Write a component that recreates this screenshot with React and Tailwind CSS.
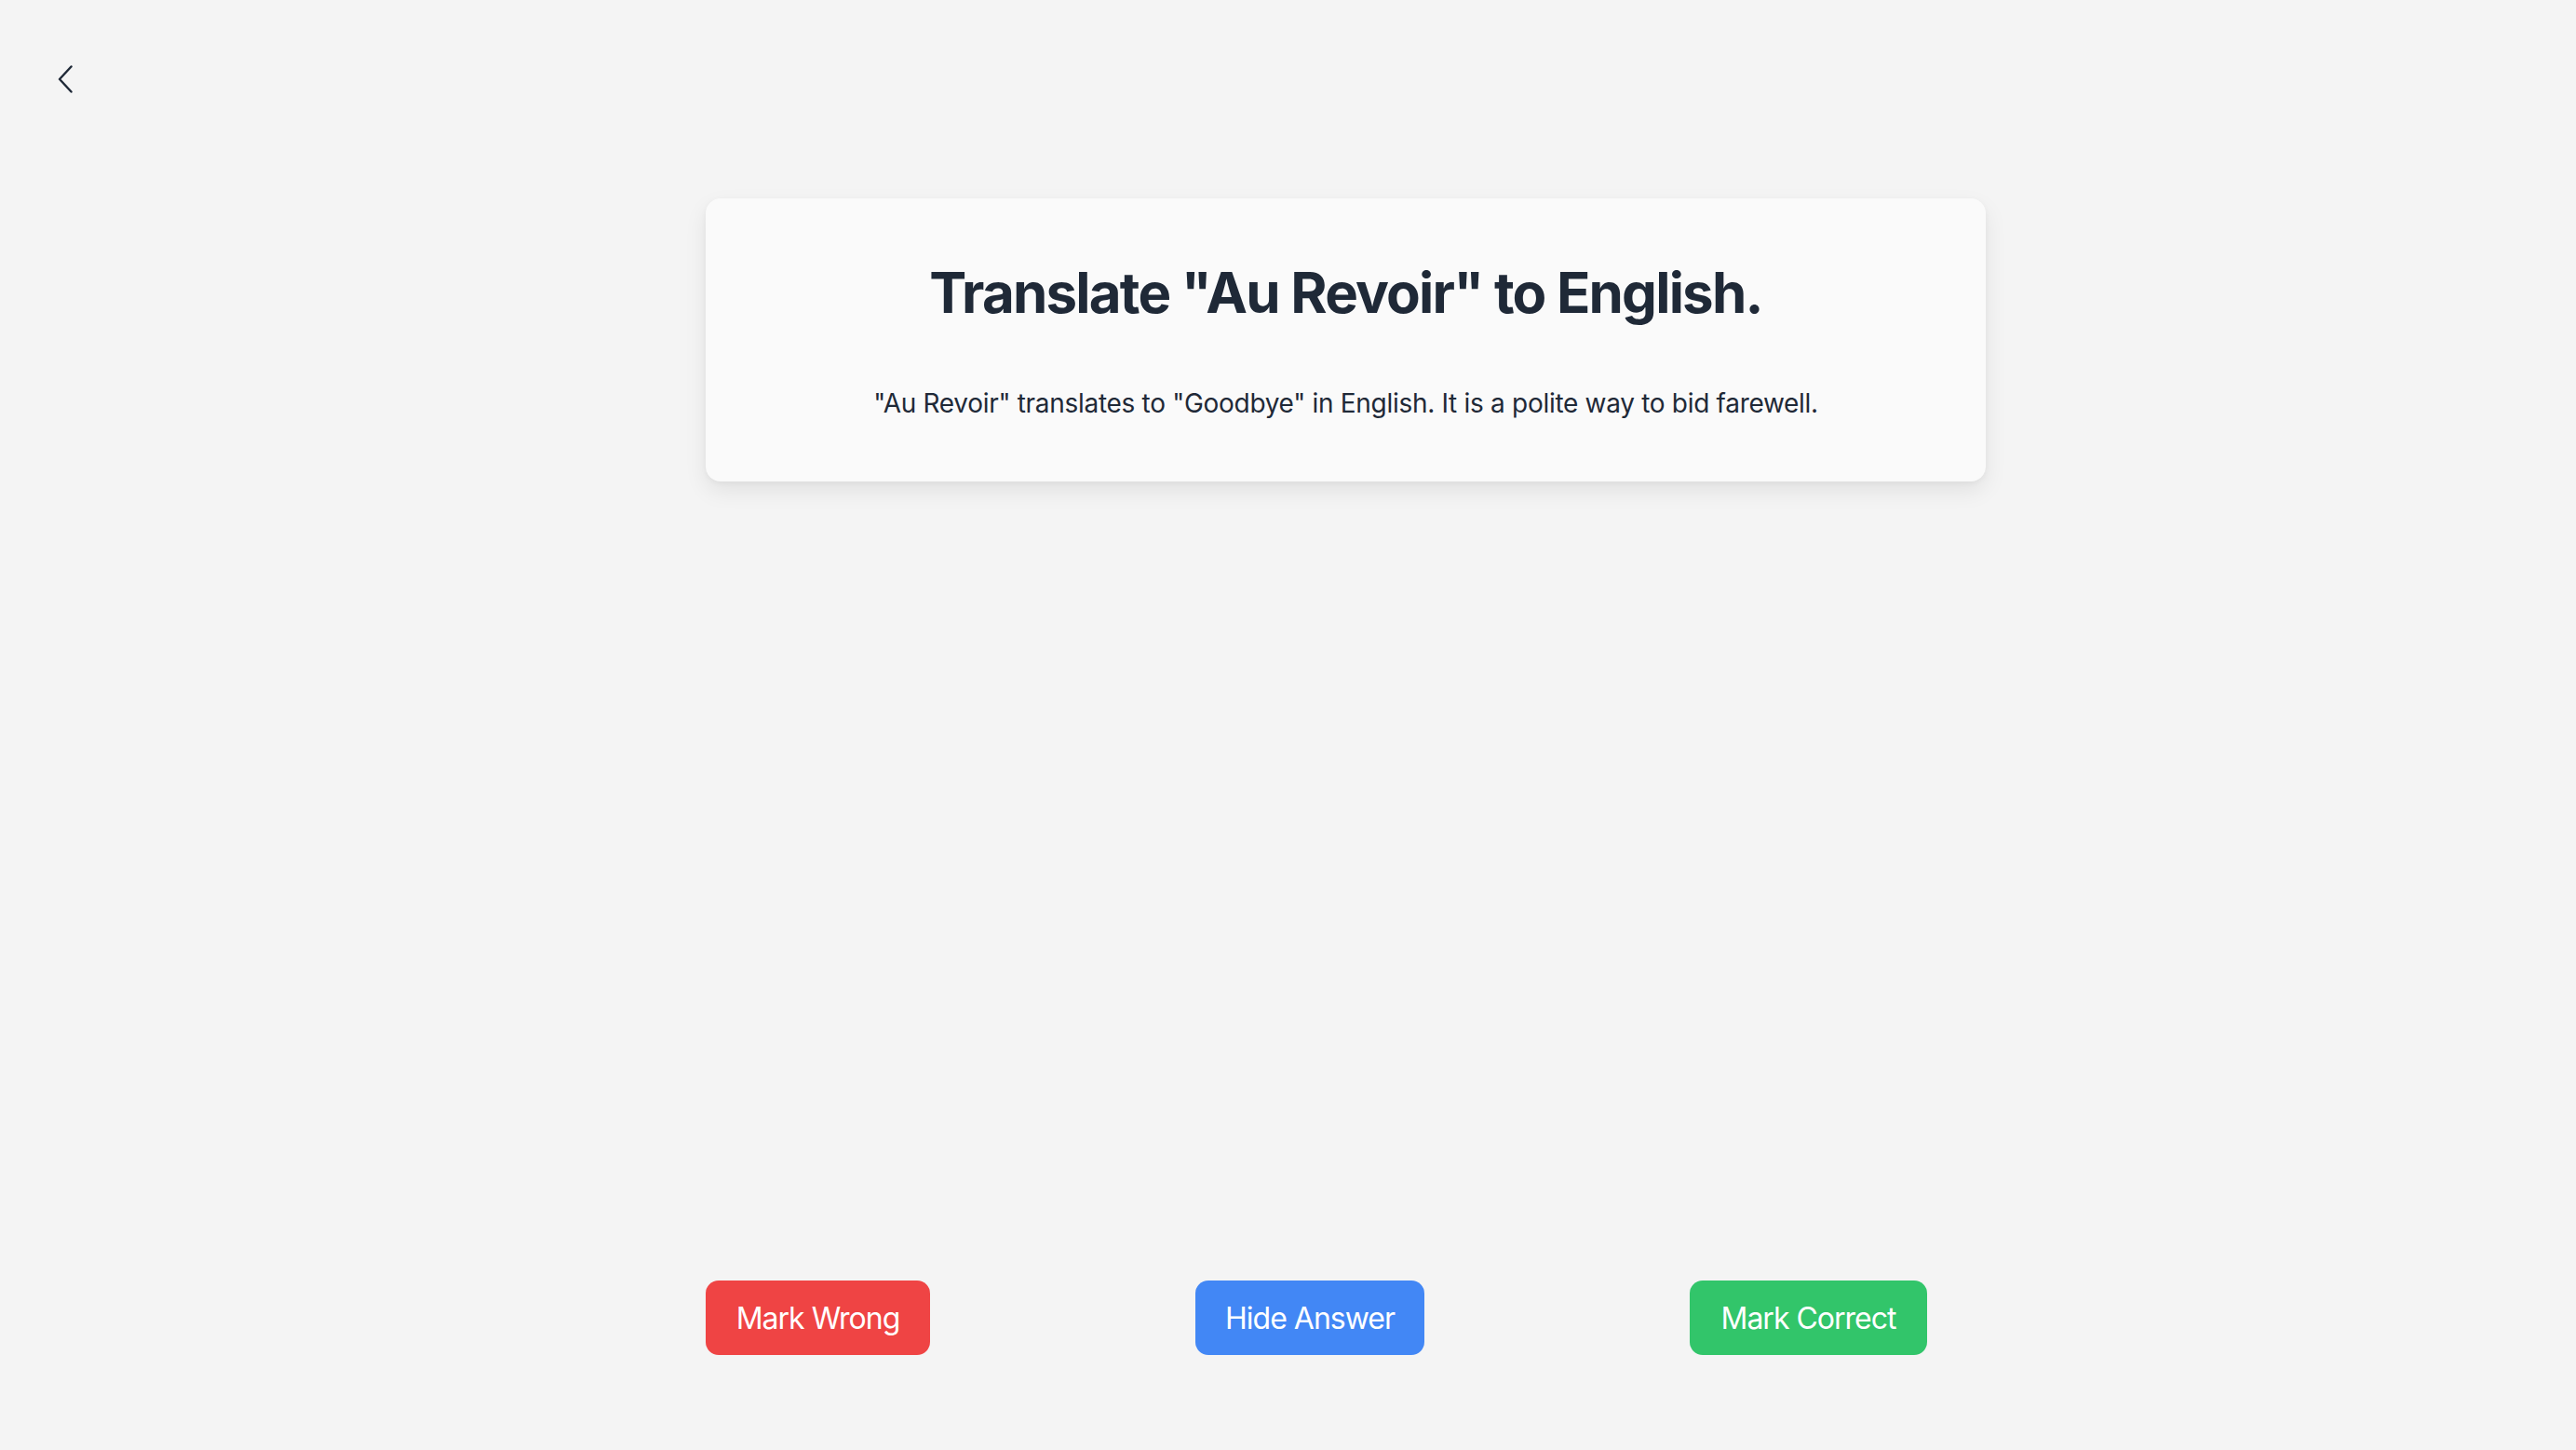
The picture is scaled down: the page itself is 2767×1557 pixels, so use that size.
import React from "react";

export default function App() {
  return (
    <div className="min-h-screen w-full bg-[#f4f4f4] flex text-[#1f2937]" style={{ fontFamily: "Inter, 'Noto Sans', sans-serif" }}>
      <aside className="w-[124px] shrink-0 pl-[62px] pt-[70px]">
        <button className="block" aria-label="Back">
          <svg width="16" height="30" viewBox="0 0 16 30" fill="none">
            <path d="M14.5 1.5 L2 15 L14.5 28.5" stroke="#1f2937" strokeWidth="2.4" strokeLinecap="round" strokeLinejoin="round" />
          </svg>
        </button>
      </aside>
      <main className="flex-1 flex flex-col items-center pt-[213px] pb-[102px]">
        <div className="w-[1375px] bg-[#fafafa] rounded-[16px] shadow-[0_10px_24px_rgba(0,0,0,0.08),0_2px_6px_rgba(0,0,0,0.04)] px-16 pt-16 pb-[63px] flex flex-col items-center gap-[60px]">
          <h1 className="text-[60px] leading-[75px] font-bold tracking-[-1.8px] text-center">Translate "Au Revoir" to English.</h1>
          <p className="text-[28px] leading-[42px] tracking-[-0.3px] text-center">"Au Revoir" translates to "Goodbye" in English. It is a polite way to bid farewell.</p>
        </div>
        <div className="flex-1" />
        <div className="w-[1375px] flex gap-[285px]">
          <button className="h-[80px] w-[241px] pt-[2px] rounded-[14px] bg-[#ef4444] text-white text-[32px] tracking-[-1px]">Mark Wrong</button>
          <button className="h-[80px] w-[246px] pt-[2px] rounded-[14px] bg-[#4287f5] text-white text-[32px] tracking-[-1px]">Hide Answer</button>
          <button className="h-[80px] w-[255px] pt-[2px] rounded-[14px] bg-[#32c56a] text-white text-[32px] tracking-[-1px]">Mark Correct</button>
        </div>
      </main>
    </div>
  );
}
